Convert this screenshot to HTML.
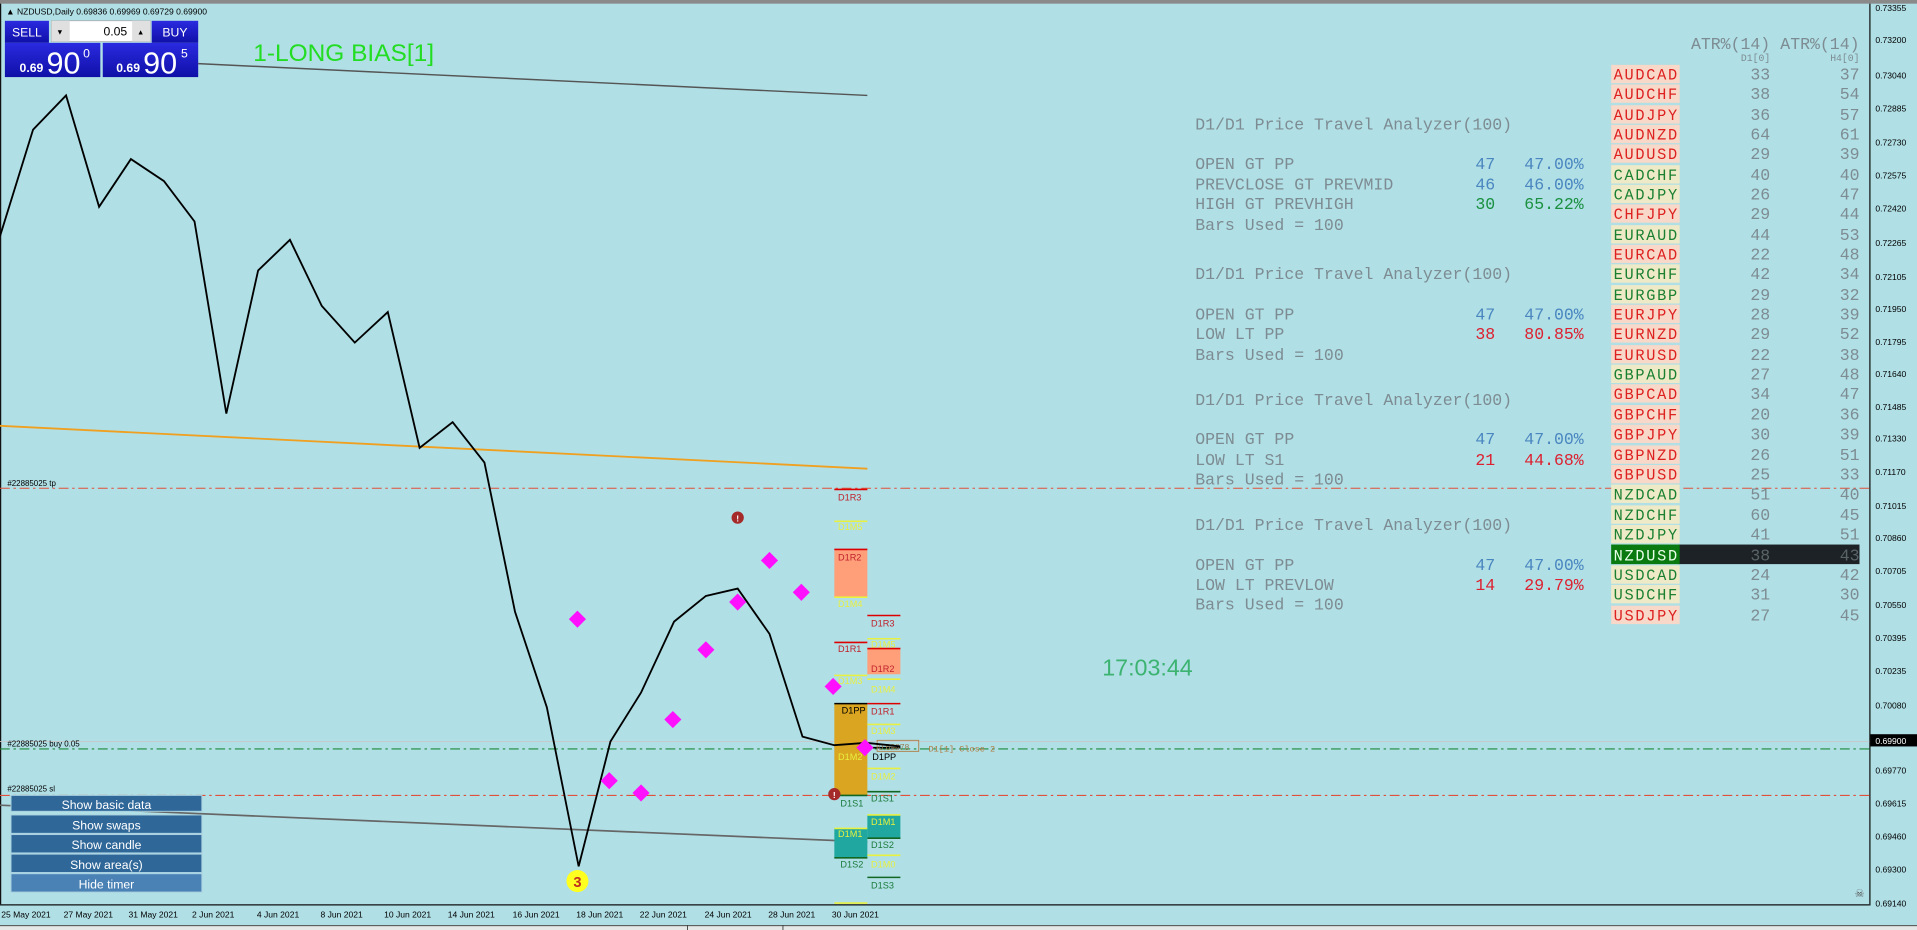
<!DOCTYPE html>
<html><head><meta charset="utf-8"><style>
html,body{margin:0;padding:0;width:1917px;height:930px;overflow:hidden;background:#b0dfe5}
svg{display:block}
.lb{font-size:12.5px}
</style></head><body>
<svg width="1917" height="930" viewBox="0 0 1567 760" preserveAspectRatio="none" xmlns="http://www.w3.org/2000/svg" font-family="Liberation Sans, sans-serif">
<rect x="0" y="0" width="1567" height="760" fill="#b0dfe5"/>
<rect x="0" y="0" width="1567" height="3" fill="#8a8a8a"/>
<line x1="0.5" y1="3" x2="0.5" y2="739" stroke="#111" stroke-width="1"/>
<line x1="1528.5" y1="3" x2="1528.5" y2="740" stroke="#111" stroke-width="1"/>
<line x1="0" y1="739.5" x2="1528" y2="739.5" stroke="#111" stroke-width="1"/>
<rect x="0" y="756" width="1567" height="4" fill="#e6e8e8"/>
<line x1="0" y1="756.5" x2="1567" y2="756.5" stroke="#333" stroke-width="0.7"/>
<line x1="562" y1="756" x2="562" y2="760" stroke="#333" stroke-width="0.7"/>
<line x1="640" y1="756" x2="640" y2="760" stroke="#333" stroke-width="0.7"/>

<text x="5" y="12" font-size="7" fill="#000">▲ NZDUSD,Daily  0.69836 0.69969 0.69729 0.69900</text>

<line x1="0" y1="399" x2="1528" y2="399" stroke="#e0503a" stroke-width="0.9" stroke-dasharray="8,3,2,3"/>
<line x1="0" y1="606" x2="1528" y2="606" stroke="#c8c8c8" stroke-width="0.8"/>
<line x1="0" y1="612" x2="1528" y2="612" stroke="#1e8a3c" stroke-width="0.9" stroke-dasharray="8,3,2,3"/>
<line x1="0" y1="650" x2="1528" y2="650" stroke="#e0503a" stroke-width="0.9" stroke-dasharray="8,3,2,3"/>
<text x="6" y="397" font-size="6.5" fill="#000">#22885025 tp</text>
<text x="6" y="610" font-size="6.5" fill="#000">#22885025 buy 0.05</text>
<text x="6" y="647" font-size="6.5" fill="#000">#22885025 sl</text>

<line x1="162" y1="52" x2="709" y2="78" stroke="#555" stroke-width="1.2"/>
<line x1="0" y1="348" x2="709" y2="383" stroke="#f0a020" stroke-width="1.5"/>
<line x1="0" y1="658" x2="709" y2="688" stroke="#666" stroke-width="1.4"/>

<rect x="682" y="449" width="27" height="39" fill="#ff9f7a"/>
<rect x="682" y="575" width="27" height="75" fill="#daa520"/>
<rect x="682" y="677" width="27" height="24" fill="#20a8a0"/>
<g stroke-width="1.3">
<line x1="682" y1="400" x2="709" y2="400" stroke="#d00"/>
<line x1="682" y1="426" x2="709" y2="426" stroke="#e8f040"/>
<line x1="682" y1="449" x2="709" y2="449" stroke="#d00"/>
<line x1="682" y1="488" x2="709" y2="488" stroke="#e8f040"/>
<line x1="682" y1="525" x2="709" y2="525" stroke="#d00"/>
<line x1="682" y1="552" x2="709" y2="552" stroke="#e8f040"/>
<line x1="682" y1="575" x2="709" y2="575" stroke="#000"/>
<line x1="682" y1="650" x2="709" y2="650" stroke="#116622"/>
<line x1="682" y1="677" x2="709" y2="677" stroke="#e8f040"/>
<line x1="682" y1="701" x2="709" y2="701" stroke="#116622"/>
<line x1="682" y1="738" x2="709" y2="738" stroke="#e8f040"/>
</g>
<g font-size="7.5">
<text x="685" y="409" fill="#c0202a">D1R3</text>
<text x="685" y="433" fill="#e8f040">D1M5</text>
<text x="685" y="458" fill="#c0202a">D1R2</text>
<text x="685" y="496" fill="#e8f040">D1M4</text>
<text x="685" y="533" fill="#c0202a">D1R1</text>
<text x="685" y="559" fill="#e8f040">D1M3</text>
<text x="688" y="583" fill="#000">D1PP</text>
<text x="685" y="621" fill="#e8f040">D1M2</text>
<text x="687" y="659" fill="#1a7a3a">D1S1</text>
<text x="685" y="684" fill="#e8f040">D1M1</text>
<text x="687" y="709" fill="#1a7a3a">D1S2</text>
</g>
<rect x="709" y="530" width="27" height="21" fill="#ff9f7a"/>
<rect x="709" y="666" width="27" height="19" fill="#20a8a0"/>
<g stroke-width="1.3">
<line x1="709" y1="503" x2="736" y2="503" stroke="#d00"/>
<line x1="709" y1="522" x2="736" y2="522" stroke="#e8f040"/>
<line x1="709" y1="530" x2="736" y2="530" stroke="#d00"/>
<line x1="709" y1="555" x2="736" y2="555" stroke="#e8f040"/>
<line x1="709" y1="575" x2="736" y2="575" stroke="#d00"/>
<line x1="709" y1="592" x2="736" y2="592" stroke="#e8f040"/>
<line x1="709" y1="611" x2="736" y2="611" stroke="#000"/>
<line x1="709" y1="628" x2="736" y2="628" stroke="#e8f040"/>
<line x1="709" y1="647" x2="736" y2="647" stroke="#116622"/>
<line x1="709" y1="666" x2="736" y2="666" stroke="#e8f040"/>
<line x1="709" y1="685" x2="736" y2="685" stroke="#116622"/>
<line x1="709" y1="699" x2="736" y2="699" stroke="#e8f040"/>
<line x1="709" y1="717" x2="736" y2="717" stroke="#116622"/>
</g>
<g font-size="7.5">
<text x="712" y="512" fill="#c0202a">D1R3</text>
<text x="712" y="529" fill="#e8f040">D1M5</text>
<text x="712" y="549" fill="#c0202a">D1R2</text>
<text x="712" y="566" fill="#e8f040">D1M4</text>
<text x="712" y="584" fill="#c0202a">D1R1</text>
<text x="712" y="600" fill="#e8f040">D1M3</text>
<text x="713" y="621" fill="#000">D1PP</text>
<text x="712" y="637" fill="#e8f040">D1M2</text>
<text x="712" y="655" fill="#1a7a3a">D1S1</text>
<text x="712" y="674" fill="#e8f040">D1M1</text>
<text x="712" y="693" fill="#1a7a3a">D1S2</text>
<text x="712" y="709" fill="#e8f040">D1M0</text>
<text x="712" y="726" fill="#1a7a3a">D1S3</text>
</g>
<rect x="717" y="605" width="34" height="9" fill="none" stroke="#b07a40" stroke-width="0.7"/>
<text x="718" y="613" font-size="7" fill="#9a7a50">0.69878</text>
<text x="759" y="614" font-size="7" fill="#b07a40" font-family="Liberation Mono, monospace">D1[1] Close 2</text>

<polyline fill="none" stroke="#000" stroke-width="1.5" points="0,193 27,106 54,78 81,169 107,130 134,148 159,181 185,338 211,221 237,196 263,250 290,280 317,255 343,366 370,345 396,378 421,500 447,578 473,708 499,606 524,566 551,508 577,487 603,481 629,518 656,602 682,609 708,607 736,610"/>

<g fill="#ff10ff">
<path d="M472,499 l7,7 -7,7 -7,-7z"/>
<path d="M498,631 l7,7 -7,7 -7,-7z"/>
<path d="M524,641 l7,7 -7,7 -7,-7z"/>
<path d="M550,581 l7,7 -7,7 -7,-7z"/>
<path d="M577,524 l7,7 -7,7 -7,-7z"/>
<path d="M603,485 l7,7 -7,7 -7,-7z"/>
<path d="M629,451 l7,7 -7,7 -7,-7z"/>
<path d="M655,477 l7,7 -7,7 -7,-7z"/>
<path d="M681,554 l7,7 -7,7 -7,-7z"/>
<path d="M707,604 l7,7 -7,7 -7,-7z"/>
</g>
<circle cx="603" cy="423" r="5" fill="#a52a2a"/><text x="603" y="426" font-size="7" fill="#fff" text-anchor="middle" font-weight="bold">!</text>
<circle cx="682" cy="649" r="5" fill="#a52a2a"/><text x="682" y="652" font-size="7" fill="#fff" text-anchor="middle" font-weight="bold">!</text>
<circle cx="472" cy="720" r="9" fill="#ffff20"/><text x="472" y="725" font-size="12" fill="#c03020" text-anchor="middle" font-weight="bold">3</text>

<text x="207" y="50" font-size="20" fill="#22dd22">1-LONG BIAS[1]</text>
<text x="901" y="552" font-size="19" fill="#3cb371">17:03:44</text>

<g font-family="Liberation Mono, monospace" font-size="13.5" fill="#7d8c92">
<text x="977" y="106">D1/D1 Price Travel Analyzer(100)</text>
<text x="977" y="138">OPEN GT PP</text>
<text x="977" y="155">PREVCLOSE GT PREVMID</text>
<text x="977" y="171">HIGH GT PREVHIGH</text>
<text x="977" y="188">Bars Used = 100</text>
<text x="977" y="228">D1/D1 Price Travel Analyzer(100)</text>
<text x="977" y="261">OPEN GT PP</text>
<text x="977" y="277">LOW LT PP</text>
<text x="977" y="294">Bars Used = 100</text>
<text x="977" y="331">D1/D1 Price Travel Analyzer(100)</text>
<text x="977" y="363">OPEN GT PP</text>
<text x="977" y="380">LOW LT S1</text>
<text x="977" y="396">Bars Used = 100</text>
<text x="977" y="433">D1/D1 Price Travel Analyzer(100)</text>
<text x="977" y="466">OPEN GT PP</text>
<text x="977" y="482">LOW LT PREVLOW</text>
<text x="977" y="498">Bars Used = 100</text>
</g>
<g font-family="Liberation Mono, monospace" font-size="13.5">
<g fill="#4a86c0">
<text x="1206" y="138">47</text><text x="1246" y="138">47.00%</text>
<text x="1206" y="155">46</text><text x="1246" y="155">46.00%</text>
<text x="1206" y="261">47</text><text x="1246" y="261">47.00%</text>
<text x="1206" y="363">47</text><text x="1246" y="363">47.00%</text>
<text x="1206" y="466">47</text><text x="1246" y="466">47.00%</text>
</g>
<g fill="#1a9040"><text x="1206" y="171">30</text><text x="1246" y="171">65.22%</text></g>
<g fill="#dd2030">
<text x="1206" y="277">38</text><text x="1246" y="277">80.85%</text>
<text x="1206" y="380">21</text><text x="1246" y="380">44.68%</text>
<text x="1206" y="482">14</text><text x="1246" y="482">29.79%</text>
</g>
</g>

<g font-family="Liberation Mono, monospace" fill="#7d8c92">
<text x="1447" y="40" font-size="13.5" text-anchor="end">ATR%(14)</text>
<text x="1520" y="40" font-size="13.5" text-anchor="end">ATR%(14)</text>
<text x="1447" y="50" font-size="8" text-anchor="end">D1[0]</text>
<text x="1520" y="50" font-size="8" text-anchor="end">H4[0]</text>
</g>
<rect x="1372" y="445" width="148" height="16" fill="#1c2226"/>
<g font-family="Liberation Mono, monospace" font-size="13.5">
<rect x="1317" y="53" width="56" height="15" fill="#f8d8c8"/><text class="lb" x="1319" y="65" textLength="52" fill="#dd2020">AUDCAD</text><text x="1447" y="65" fill="#7d8c92" text-anchor="end">33</text><text x="1520" y="65" fill="#7d8c92" text-anchor="end">37</text>
<rect x="1317" y="69" width="56" height="15" fill="#f8d8c8"/><text class="lb" x="1319" y="81" textLength="52" fill="#dd2020">AUDCHF</text><text x="1447" y="81" fill="#7d8c92" text-anchor="end">38</text><text x="1520" y="81" fill="#7d8c92" text-anchor="end">54</text>
<rect x="1317" y="86" width="56" height="15" fill="#f8d8c8"/><text class="lb" x="1319" y="98" textLength="52" fill="#dd2020">AUDJPY</text><text x="1447" y="98" fill="#7d8c92" text-anchor="end">36</text><text x="1520" y="98" fill="#7d8c92" text-anchor="end">57</text>
<rect x="1317" y="102" width="56" height="15" fill="#f8d8c8"/><text class="lb" x="1319" y="114" textLength="52" fill="#dd2020">AUDNZD</text><text x="1447" y="114" fill="#7d8c92" text-anchor="end">64</text><text x="1520" y="114" fill="#7d8c92" text-anchor="end">61</text>
<rect x="1317" y="118" width="56" height="15" fill="#f8d8c8"/><text class="lb" x="1319" y="130" textLength="52" fill="#dd2020">AUDUSD</text><text x="1447" y="130" fill="#7d8c92" text-anchor="end">29</text><text x="1520" y="130" fill="#7d8c92" text-anchor="end">39</text>
<rect x="1317" y="135" width="56" height="15" fill="#eeeac8"/><text class="lb" x="1319" y="147" textLength="52" fill="#1a8030">CADCHF</text><text x="1447" y="147" fill="#7d8c92" text-anchor="end">40</text><text x="1520" y="147" fill="#7d8c92" text-anchor="end">40</text>
<rect x="1317" y="151" width="56" height="15" fill="#eeeac8"/><text class="lb" x="1319" y="163" textLength="52" fill="#1a8030">CADJPY</text><text x="1447" y="163" fill="#7d8c92" text-anchor="end">26</text><text x="1520" y="163" fill="#7d8c92" text-anchor="end">47</text>
<rect x="1317" y="167" width="56" height="15" fill="#f8d8c8"/><text class="lb" x="1319" y="179" textLength="52" fill="#dd2020">CHFJPY</text><text x="1447" y="179" fill="#7d8c92" text-anchor="end">29</text><text x="1520" y="179" fill="#7d8c92" text-anchor="end">44</text>
<rect x="1317" y="184" width="56" height="15" fill="#eeeac8"/><text class="lb" x="1319" y="196" textLength="52" fill="#1a8030">EURAUD</text><text x="1447" y="196" fill="#7d8c92" text-anchor="end">44</text><text x="1520" y="196" fill="#7d8c92" text-anchor="end">53</text>
<rect x="1317" y="200" width="56" height="15" fill="#f8d8c8"/><text class="lb" x="1319" y="212" textLength="52" fill="#dd2020">EURCAD</text><text x="1447" y="212" fill="#7d8c92" text-anchor="end">22</text><text x="1520" y="212" fill="#7d8c92" text-anchor="end">48</text>
<rect x="1317" y="216" width="56" height="15" fill="#eeeac8"/><text class="lb" x="1319" y="228" textLength="52" fill="#1a8030">EURCHF</text><text x="1447" y="228" fill="#7d8c92" text-anchor="end">42</text><text x="1520" y="228" fill="#7d8c92" text-anchor="end">34</text>
<rect x="1317" y="233" width="56" height="15" fill="#eeeac8"/><text class="lb" x="1319" y="245" textLength="52" fill="#1a8030">EURGBP</text><text x="1447" y="245" fill="#7d8c92" text-anchor="end">29</text><text x="1520" y="245" fill="#7d8c92" text-anchor="end">32</text>
<rect x="1317" y="249" width="56" height="15" fill="#f8d8c8"/><text class="lb" x="1319" y="261" textLength="52" fill="#dd2020">EURJPY</text><text x="1447" y="261" fill="#7d8c92" text-anchor="end">28</text><text x="1520" y="261" fill="#7d8c92" text-anchor="end">39</text>
<rect x="1317" y="265" width="56" height="15" fill="#f8d8c8"/><text class="lb" x="1319" y="277" textLength="52" fill="#dd2020">EURNZD</text><text x="1447" y="277" fill="#7d8c92" text-anchor="end">29</text><text x="1520" y="277" fill="#7d8c92" text-anchor="end">52</text>
<rect x="1317" y="282" width="56" height="15" fill="#f8d8c8"/><text class="lb" x="1319" y="294" textLength="52" fill="#dd2020">EURUSD</text><text x="1447" y="294" fill="#7d8c92" text-anchor="end">22</text><text x="1520" y="294" fill="#7d8c92" text-anchor="end">38</text>
<rect x="1317" y="298" width="56" height="15" fill="#eeeac8"/><text class="lb" x="1319" y="310" textLength="52" fill="#1a8030">GBPAUD</text><text x="1447" y="310" fill="#7d8c92" text-anchor="end">27</text><text x="1520" y="310" fill="#7d8c92" text-anchor="end">48</text>
<rect x="1317" y="314" width="56" height="15" fill="#f8d8c8"/><text class="lb" x="1319" y="326" textLength="52" fill="#dd2020">GBPCAD</text><text x="1447" y="326" fill="#7d8c92" text-anchor="end">34</text><text x="1520" y="326" fill="#7d8c92" text-anchor="end">47</text>
<rect x="1317" y="331" width="56" height="15" fill="#f8d8c8"/><text class="lb" x="1319" y="343" textLength="52" fill="#dd2020">GBPCHF</text><text x="1447" y="343" fill="#7d8c92" text-anchor="end">20</text><text x="1520" y="343" fill="#7d8c92" text-anchor="end">36</text>
<rect x="1317" y="347" width="56" height="15" fill="#f8d8c8"/><text class="lb" x="1319" y="359" textLength="52" fill="#dd2020">GBPJPY</text><text x="1447" y="359" fill="#7d8c92" text-anchor="end">30</text><text x="1520" y="359" fill="#7d8c92" text-anchor="end">39</text>
<rect x="1317" y="364" width="56" height="15" fill="#f8d8c8"/><text class="lb" x="1319" y="376" textLength="52" fill="#dd2020">GBPNZD</text><text x="1447" y="376" fill="#7d8c92" text-anchor="end">26</text><text x="1520" y="376" fill="#7d8c92" text-anchor="end">51</text>
<rect x="1317" y="380" width="56" height="15" fill="#f8d8c8"/><text class="lb" x="1319" y="392" textLength="52" fill="#dd2020">GBPUSD</text><text x="1447" y="392" fill="#7d8c92" text-anchor="end">25</text><text x="1520" y="392" fill="#7d8c92" text-anchor="end">33</text>
<rect x="1317" y="396" width="56" height="15" fill="#eeeac8"/><text class="lb" x="1319" y="408" textLength="52" fill="#1a8030">NZDCAD</text><text x="1447" y="408" fill="#7d8c92" text-anchor="end">51</text><text x="1520" y="408" fill="#7d8c92" text-anchor="end">40</text>
<rect x="1317" y="413" width="56" height="15" fill="#eeeac8"/><text class="lb" x="1319" y="425" textLength="52" fill="#1a8030">NZDCHF</text><text x="1447" y="425" fill="#7d8c92" text-anchor="end">60</text><text x="1520" y="425" fill="#7d8c92" text-anchor="end">45</text>
<rect x="1317" y="429" width="56" height="15" fill="#eeeac8"/><text class="lb" x="1319" y="441" textLength="52" fill="#1a8030">NZDJPY</text><text x="1447" y="441" fill="#7d8c92" text-anchor="end">41</text><text x="1520" y="441" fill="#7d8c92" text-anchor="end">51</text>
<rect x="1317" y="445" width="56" height="16" fill="#0a7a10"/><text class="lb" x="1319" y="458" textLength="52" fill="#e8ffe8">NZDUSD</text><text x="1447" y="458" fill="#5a6468" text-anchor="end">38</text><text x="1520" y="458" fill="#5a6468" text-anchor="end">43</text>
<rect x="1317" y="462" width="56" height="15" fill="#eeeac8"/><text class="lb" x="1319" y="474" textLength="52" fill="#1a8030">USDCAD</text><text x="1447" y="474" fill="#7d8c92" text-anchor="end">24</text><text x="1520" y="474" fill="#7d8c92" text-anchor="end">42</text>
<rect x="1317" y="478" width="56" height="15" fill="#eeeac8"/><text class="lb" x="1319" y="490" textLength="52" fill="#1a8030">USDCHF</text><text x="1447" y="490" fill="#7d8c92" text-anchor="end">31</text><text x="1520" y="490" fill="#7d8c92" text-anchor="end">30</text>
<rect x="1317" y="495" width="56" height="15" fill="#f8d8c8"/><text class="lb" x="1319" y="507" textLength="52" fill="#dd2020">USDJPY</text><text x="1447" y="507" fill="#7d8c92" text-anchor="end">27</text><text x="1520" y="507" fill="#7d8c92" text-anchor="end">45</text>
</g>

<g font-size="7" fill="#000">
<text x="1533" y="9">0.73355</text><text x="1533" y="35">0.73200</text><text x="1533" y="64">0.73040</text>
<text x="1533" y="91">0.72885</text><text x="1533" y="119">0.72730</text><text x="1533" y="146">0.72575</text>
<text x="1533" y="173">0.72420</text><text x="1533" y="201">0.72265</text><text x="1533" y="229">0.72105</text>
<text x="1533" y="255">0.71950</text><text x="1533" y="282">0.71795</text><text x="1533" y="308">0.71640</text>
<text x="1533" y="335">0.71485</text><text x="1533" y="361">0.71330</text><text x="1533" y="388">0.71170</text>
<text x="1533" y="416">0.71015</text><text x="1533" y="442">0.70860</text><text x="1533" y="469">0.70705</text>
<text x="1533" y="497">0.70550</text><text x="1533" y="524">0.70395</text><text x="1533" y="551">0.70235</text>
<text x="1533" y="579">0.70080</text><text x="1533" y="632">0.69770</text><text x="1533" y="659">0.69615</text>
<text x="1533" y="686">0.69460</text><text x="1533" y="713">0.69300</text><text x="1533" y="741">0.69140</text>
</g>
<rect x="1529" y="600" width="38" height="10" fill="#000"/>
<text x="1533" y="608" font-size="7" fill="#fff">0.69900</text>
<text x="1520" y="733" font-size="9" fill="#555" text-anchor="middle">☠</text>

<g font-size="7" fill="#000">
<text x="1" y="750">25 May 2021</text><text x="52" y="750">27 May 2021</text><text x="105" y="750">31 May 2021</text>
<text x="157" y="750">2 Jun 2021</text><text x="210" y="750">4 Jun 2021</text><text x="262" y="750">8 Jun 2021</text>
<text x="314" y="750">10 Jun 2021</text><text x="366" y="750">14 Jun 2021</text><text x="419" y="750">16 Jun 2021</text>
<text x="471" y="750">18 Jun 2021</text><text x="523" y="750">22 Jun 2021</text><text x="576" y="750">24 Jun 2021</text>
<text x="628" y="750">28 Jun 2021</text><text x="680" y="750">30 Jun 2021</text>
</g>

<defs><linearGradient id="bg" x1="0" y1="0" x2="0" y2="1"><stop offset="0" stop-color="#2a2ae0"/><stop offset="1" stop-color="#1010a8"/></linearGradient></defs>
<rect x="4" y="17" width="36" height="18" fill="url(#bg)"/>
<text x="22" y="30" font-size="10" fill="#fff" text-anchor="middle">SELL</text>
<rect x="124" y="17" width="38" height="18" fill="url(#bg)"/>
<text x="143" y="30" font-size="10" fill="#fff" text-anchor="middle">BUY</text>
<rect x="42" y="17" width="81" height="17" fill="#fff" stroke="#999" stroke-width="0.5"/>
<rect x="42" y="17" width="15" height="17" fill="#e0e0e0"/>
<rect x="108" y="17" width="15" height="17" fill="#e0e0e0"/>
<text x="49" y="28" font-size="6" text-anchor="middle">▼</text>
<text x="115" y="28" font-size="6" text-anchor="middle">▲</text>
<text x="104" y="29" font-size="10" text-anchor="end">0.05</text>
<rect x="4" y="35" width="78" height="28" fill="url(#bg)"/>
<rect x="84" y="35" width="78" height="28" fill="url(#bg)"/>
<text x="16" y="59" font-size="10" fill="#fff" font-weight="bold">0.69</text>
<text x="38" y="60" font-size="25" fill="#fff">90</text>
<text x="68" y="47" font-size="10" fill="#fff">0</text>
<text x="95" y="59" font-size="10" fill="#fff" font-weight="bold">0.69</text>
<text x="117" y="60" font-size="25" fill="#fff">90</text>
<text x="148" y="47" font-size="10" fill="#fff">5</text>

<g font-size="10" fill="#fff" text-anchor="middle">
<rect x="9" y="650" width="156" height="13" fill="#2f6799" stroke="#a8d0e0" stroke-width="0.8"/><text x="87" y="661">Show basic data</text>
<rect x="9" y="666" width="156" height="15" fill="#2f6799" stroke="#a8d0e0" stroke-width="0.8"/><text x="87" y="678">Show swaps</text>
<rect x="9" y="682" width="156" height="15" fill="#2f6799" stroke="#a8d0e0" stroke-width="0.8"/><text x="87" y="694">Show candle</text>
<rect x="9" y="698" width="156" height="15" fill="#2f6799" stroke="#a8d0e0" stroke-width="0.8"/><text x="87" y="710">Show area(s)</text>
<rect x="9" y="714" width="156" height="15" fill="#4a82b5" stroke="#a8d0e0" stroke-width="0.8"/><text x="87" y="726">Hide timer</text>
</g>
</svg>
</body></html>
